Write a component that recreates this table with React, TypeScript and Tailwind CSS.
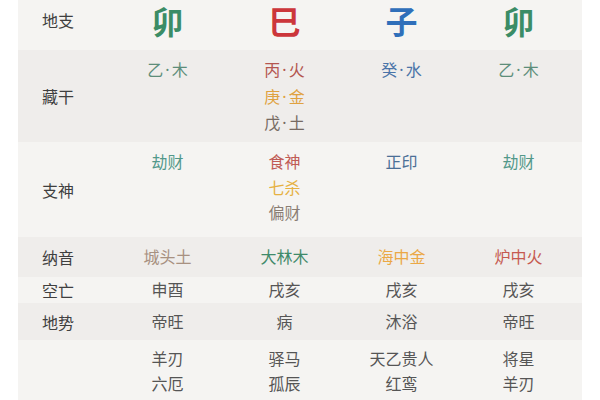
const FONT = "font-['Noto_Sans_CJK_SC','Noto_Sans',sans-serif]";

type Cell = { t: string; c: string }[];

const LIGHT = "bg-[#f5f4f2]";
const DARK = "bg-[#efedeb]";

const rows: { label: string; bg: string; h: string; top?: boolean; cells: Cell[] }[] = [
  {
    label: "藏干",
    bg: DARK,
    h: "h-[92px]",
    top: true,
    cells: [
      [{ t: "乙·木", c: "text-[#5d8d7a]" }],
      [
        { t: "丙·火", c: "text-[#b4564f]" },
        { t: "庚·金", c: "text-[#e0a23f]" },
        { t: "戊·土", c: "text-[#766a62]" },
      ],
      [{ t: "癸·水", c: "text-[#4a74a8]" }],
      [{ t: "乙·木", c: "text-[#5d8d7a]" }],
    ],
  },
  {
    label: "支神",
    bg: LIGHT,
    h: "h-[95px]",
    top: true,
    cells: [
      [{ t: "劫财", c: "text-[#52988a]" }],
      [
        { t: "食神", c: "text-[#c05b55]" },
        { t: "七杀", c: "text-[#e6b142]" },
        { t: "偏财", c: "text-[#8a7e74]" },
      ],
      [{ t: "正印", c: "text-[#4b6f96]" }],
      [{ t: "劫财", c: "text-[#52988a]" }],
    ],
  },
  {
    label: "纳音",
    bg: DARK,
    h: "h-[40px]",
    cells: [
      [{ t: "城头土", c: "text-[#a89181]" }],
      [{ t: "大林木", c: "text-[#3f8a6a]" }],
      [{ t: "海中金", c: "text-[#eba846]" }],
      [{ t: "炉中火", c: "text-[#c65a50]" }],
    ],
  },
  {
    label: "空亡",
    bg: LIGHT,
    h: "h-[26px]",
    cells: [
      [{ t: "申酉", c: "text-[#555]" }],
      [{ t: "戌亥", c: "text-[#555]" }],
      [{ t: "戌亥", c: "text-[#555]" }],
      [{ t: "戌亥", c: "text-[#555]" }],
    ],
  },
  {
    label: "地势",
    bg: DARK,
    h: "h-[37px]",
    cells: [
      [{ t: "帝旺", c: "text-[#555]" }],
      [{ t: "病", c: "text-[#555]" }],
      [{ t: "沐浴", c: "text-[#555]" }],
      [{ t: "帝旺", c: "text-[#555]" }],
    ],
  },
];

const shensha: string[][] = [
  ["羊刃", "六厄"],
  ["驿马", "孤辰"],
  ["天乙贵人", "红鸾"],
  ["将星", "羊刃"],
];

// the middle dot is narrow in the reference, so set it in a latin font
function Text({ t }: { t: string }) {
  const parts = t.split("·");
  if (parts.length === 1) return <>{t}</>;
  return (
    <>
      {parts[0]}
      <span className="mx-[2px] font-['Noto_Sans',sans-serif]">·</span>
      {parts[1]}
    </>
  );
}

export default function App() {
  const branches = [
    { t: "卯", c: "text-[#3b8c66]" },
    { t: "巳", c: "text-[#cc363b]" },
    { t: "子", c: "text-[#2f6fba]" },
    { t: "卯", c: "text-[#3b8c66]" },
  ];

  return (
    <div className={`w-[600px] h-[400px] overflow-hidden bg-white ${FONT}`}>
      <div className="mx-[18px] flex flex-col">
        <div className={`flex h-[50px] items-start pt-[2px] ${LIGHT}`}>
          <div className="w-[91px] pl-[24px] text-[16px] leading-[36px] text-[#3f3f3f]">
            地支
          </div>
          {branches.map((b, i) => (
            <div
              key={i}
              className={`w-[117px] text-center text-[32px] font-bold leading-[36px] ${b.c}`}
            >
              {b.t}
            </div>
          ))}
        </div>

        {rows.map((r) => (
          <div key={r.label} className={`flex items-center ${r.h} ${r.bg}`}>
            <div className="w-[91px] pl-[24px] text-[16px] text-[#3f3f3f]">
              {r.label}
            </div>
            {r.cells.map((cell, i) => (
              <div
                key={i}
                className={`flex h-full w-[117px] flex-col items-center text-[16px] leading-[25.5px] ${
                  r.top ? "justify-start pt-[7px]" : "justify-center"
                }`}
              >
                {cell.map((x, j) => (
                  <span key={j} className={x.c}>
                    <Text t={x.t} />
                  </span>
                ))}
              </div>
            ))}
          </div>
        ))}

        <div className={`flex h-[80px] items-start pt-[6px] ${LIGHT}`}>
          <div className="w-[91px]" />
          {shensha.map((col, i) => (
            <div
              key={i}
              className="flex w-[117px] flex-col items-center text-[16px] leading-[25px] text-[#555]"
            >
              {col.map((s, j) => (
                <span key={j}>{s}</span>
              ))}
            </div>
          ))}
        </div>
      </div>
    </div>
  );
}
